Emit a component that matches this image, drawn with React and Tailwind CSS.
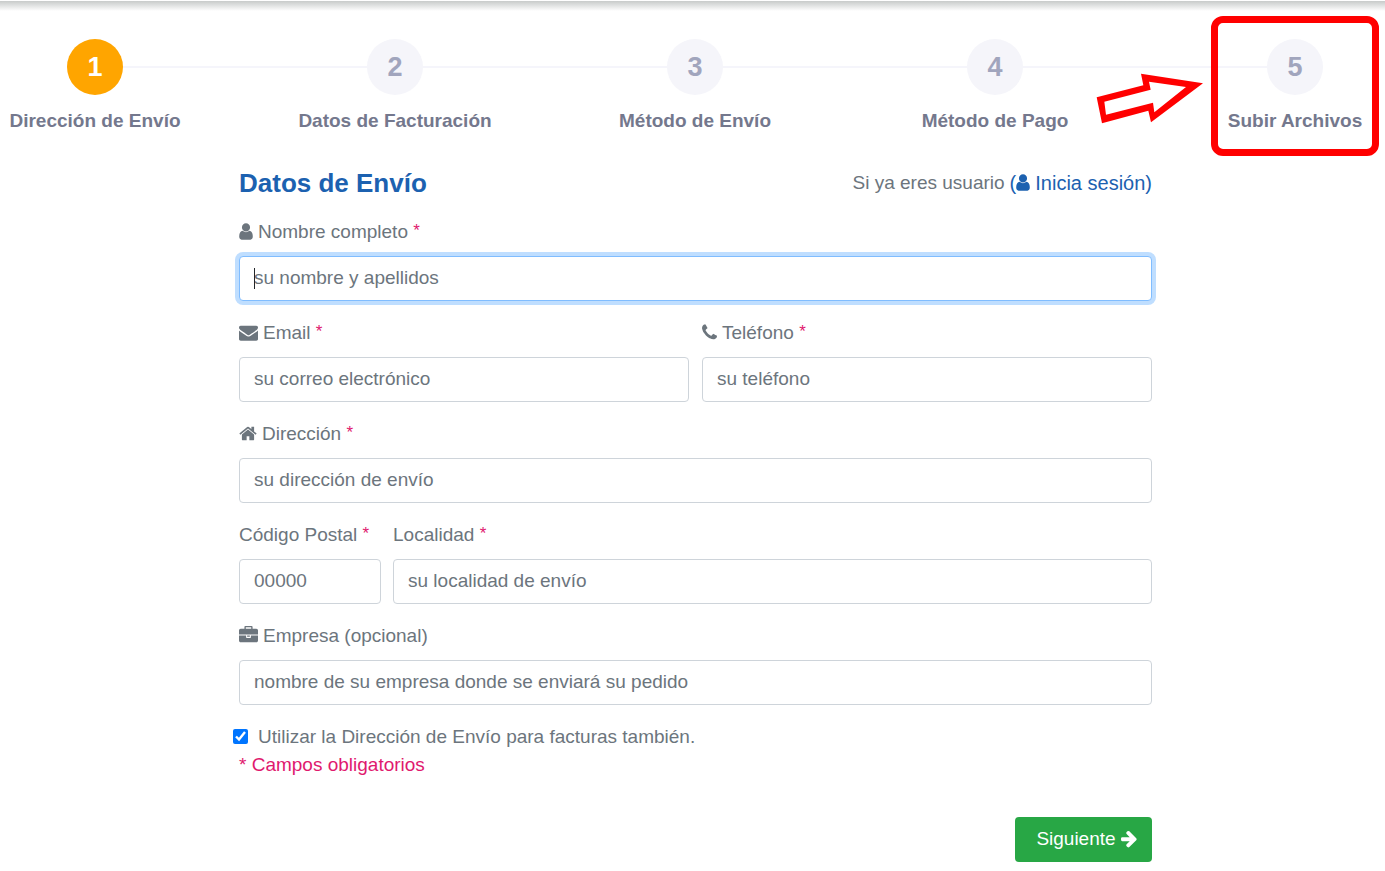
import React from 'react'

const ICONS = {
  user: {
    box: '256 0 1280 1792',
    size: 'w-[14px] h-[19px]',
    d: 'M1536 1399q0 109-62.5 187t-150.5 78h-854q-88 0-150.5-78t-62.5-187q0-85 8.5-160.5t31.5-152 58.5-131 94-89 134.5-34.5q131 128 313 128t313-128q76 0 134.5 34.5t94 89 58.5 131 31.5 152 8.5 160.5zm-256-887q0 159-112.5 271.5t-271.5 112.5-271.5-112.5-112.5-271.5 112.5-271.5 271.5-112.5 271.5 112.5 112.5 271.5z',
  },
  envelope: {
    box: '0 0 1792 1792',
    size: 'w-[19px] h-[19px]',
    d: 'M1792 710v794q0 66-47 113t-113 47h-1472q-66 0-113-47t-47-113v-794q44 49 101 87 362 246 497 345 57 42 92.5 65.5t94.5 48 110 24.5h2q51 0 110-24.5t94.5-48 92.5-65.5q170-123 498-345 57-39 100-87zm0-294q0 79-49 151t-122 123q-376 261-468 325-10 7-42.5 31t-54 38.5-52 32.5-57.5 27-50 9h-2q-23 0-50-9t-57.5-27-52-32.5-54-38.5-42.5-31q-91-64-262-182.5t-205-142.5q-62-42-117-115.5t-55-136.5q0-78 41.5-130t118.5-52h1472q65 0 112.5 47t47.5 113z',
  },
  phone: {
    box: '192 0 1408 1792',
    size: 'w-[15px] h-[19px]',
    d: 'M1600 1240q0 27-10 70.5t-21 68.5q-21 50-122 106-94 51-186 51-27 0-53-3.5t-57.5-12.5-47-14.5-55.5-20.5-49-18q-98-35-175-83-127-79-264-216t-216-264q-48-77-83-175-3-9-18-49t-20.5-55.5-14.5-47-12.5-57.5-3.5-53q0-92 51-186 56-101 106-122 25-11 68.5-21t70.5-10q14 0 21 3 18 6 53 76 11 19 30 54t35 63.5 31 53.5q3 4 17.5 25t21.5 35.5 7 28.5q0 20-28.5 50t-62 55-62 53-28.5 46q0 9 5 22.5t8.5 20.5 14 24 11.5 19q76 137 174 235t235 174q2 1 19 11.5t24 14 20.5 8.5 22.5 5q18 0 46-28.5t53-62 55-62 50-28.5q14 0 28.5 7t35.5 21.5 25 17.5q25 15 53.5 31t63.5 35 54 30q70 35 76 53 3 7 3 21z',
  },
  home: {
    box: '64 0 1664 1792',
    size: 'w-[18px] h-[19px]',
    d: 'M1472 992v480q0 26-19 45t-45 19h-384v-384h-256v384h-384q-26 0-45-19t-19-45v-480q0-1 .5-3t.5-3l575-474 575 474q1 2 1 6zm223-69l-62 74q-8 9-21 11h-3q-13 0-21-7l-692-577-692 577q-12 8-24 7-13-2-21-11l-62-74q-8-10-7-23.5t11-21.5l719-599q32-26 76-26t76 26l244 204v-195q0-14 9-23t23-9h192q14 0 23 9t9 23v408l219 182q10 8 11 21.5t-7 23.5z',
  },
  briefcase: {
    box: '0 0 1792 1792',
    size: 'w-[19px] h-[19px]',
    d: 'M640 256h512v-128h-512v128zm1152 640v480q0 66-47 113t-113 47h-1472q-66 0-113-47t-47-113v-480h672v160q0 26 19 45t45 19h320q26 0 45-19t19-45v-160h672zm-768 0v128h-256v-128h256zm768-480v384h-1792v-384q0-66 47-113t113-47h352v-160q0-40 28-68t68-28h576q40 0 68 28t28 68v160h352q66 0 113 47t47 113z',
  },
  arrow: {
    box: '128 0 1536 1792',
    size: 'w-[17px] h-[19px]',
    d: 'M1664 960q0 54-37 91l-651 651q-39 37-91 37-51 0-90-37l-75-75q-38-38-38-91t38-91l293-293h-704q-52 0-84.5-37.5t-32.5-90.5v-128q0-53 32.5-90.5t84.5-37.5h704l-293-294q-38-36-38-90t38-90l75-75q38-38 90-38 53 0 91 38l651 651q37 35 37 90z',
  },
}

const Icon = ({ name }) => (
  <svg viewBox={ICONS[name].box} className={`mb-0.5 shrink-0 ${ICONS[name].size}`} fill="currentColor" aria-hidden="true">
    <path d={ICONS[name].d} />
  </svg>
)

const STEPS = ['Dirección de Envío', 'Datos de Facturación', 'Método de Envío', 'Método de Pago', 'Subir Archivos']

const Steps = () => (
  <ol className="relative flex justify-between pl-[5px]">
    <div className="absolute left-[95px] right-[90px] top-[27px] h-[2px] bg-[#f5f5fb]"></div>
    {STEPS.map((label, i) => (
      <li key={label} className="relative flex w-[180px] flex-col items-center">
        <span
          className={`flex h-14 w-14 items-center justify-center rounded-full text-[27px] font-bold ${i === 0 ? 'bg-[#ffa500] text-white' : 'bg-[#f5f5fa] text-[#a1a5bd]'}`}
        >
          {i + 1}
        </span>
        <span className="mt-3 whitespace-nowrap text-[19px] font-bold leading-7 text-[#74788d]">{label}</span>
        {i === STEPS.length - 1 && (
          <>
            <div className="absolute -top-[23px] left-[6px] right-[6px] h-[140px] rounded-xl border-[7px] border-[#ff0000]"></div>
            <svg viewBox="18 25 324 153" className="absolute right-[181px] top-[34px] h-[51px] w-[108px]" aria-hidden="true">
              <path d="M20 98L160 62L153 27L339 56L183 173L175 138L36 176Z" fill="#ff0000" />
              <path d="M43 111L182 75L177 51L288 67L193 143L189 114L48 150Z" fill="#ffffff" />
            </svg>
          </>
        )}
      </li>
    ))}
  </ol>
)

const Field = ({ id, label, icon, required, focused, type = 'text', placeholder, className = '' }) => (
  <div className={`flex flex-col gap-[10px] ${className}`}>
    <label htmlFor={id} className="flex items-center gap-[5px] leading-7">
      {icon && <Icon name={icon} />}
      <span>
        {label} {required && <span className="align-top text-[17px] leading-[26px] text-[#e0196e]">*</span>}
      </span>
    </label>
    <div className="relative">
      <input
        id={id}
        type={type}
        placeholder={placeholder}
        className={`block h-[45px] w-full rounded border bg-white px-[14px] pb-0.5 text-[#495057] outline-none placeholder:text-[#6c757d] ${focused ? 'border-[#80bdff] ring-4 ring-[#bfdeff]' : 'border-[#ced4da]'}`}
      />
      {focused && <span className="absolute left-[15px] top-3 h-[21px] w-px bg-[#212529]"></span>}
    </div>
  </div>
)

const App = () => {
  return (
    <div className="bg-white pt-px font-['Liberation_Sans',Arial,sans-serif] text-[19px] text-[#6c757d]">
      <div className="h-[10px] bg-linear-to-b from-[#c8cbca] to-white"></div>
      <div className="pt-7">
        <Steps />
      </div>

      <main className="pl-[6px]">
        <form className="mx-auto flex w-full max-w-[913px] flex-col gap-[18px] pt-8" onSubmit={(e) => e.preventDefault()}>
          <div className="flex items-center justify-between pb-px">
            <h1 className="text-[26px] font-bold leading-8 text-[#1c61b0]">Datos de Envío</h1>
            <p className="flex items-center gap-[5px] leading-8">
              Si ya eres usuario
              <a href="#login" className="flex items-center text-[20px] text-[#1c61b0]">
                (<Icon name="user" />
                <span className="pl-[5px]">Inicia sesión)</span>
              </a>
            </p>
          </div>

          <Field id="nombre" label="Nombre completo" icon="user" required focused placeholder="su nombre y apellidos" />

          <div className="flex gap-[13px]">
            <Field id="email" type="email" label="Email" icon="envelope" required placeholder="su correo electrónico" className="flex-1" />
            <Field id="telefono" type="tel" label="Teléfono" icon="phone" required placeholder="su teléfono" className="flex-1" />
          </div>

          <Field id="direccion" label="Dirección" icon="home" required placeholder="su dirección de envío" />

          <div className="flex gap-3">
            <Field id="cp" label="Código Postal" required placeholder="00000" className="w-[142px]" />
            <Field id="localidad" label="Localidad" required placeholder="su localidad de envío" className="flex-1" />
          </div>

          <Field id="empresa" label="Empresa (opcional)" icon="briefcase" placeholder="nombre de su empresa donde se enviará su pedido" />

          <div>
            <label className="-ml-[6px] flex items-center gap-[10px] leading-7">
              <input type="checkbox" defaultChecked className="mb-0.5 h-[15px] w-[15px] accent-[#0075ff]" />
              Utilizar la Dirección de Envío para facturas también.
            </label>
            <p className="leading-7 text-[#e0196e]">* Campos obligatorios</p>
          </div>

          <div className="flex justify-end pt-5">
            <button type="submit" className="flex h-[45px] w-[137px] items-center justify-center gap-1 rounded bg-[#28a745] pl-[6px] text-white">
              Siguiente
              <Icon name="arrow" />
            </button>
          </div>
        </form>
      </main>
    </div>
  )
}

export default App
